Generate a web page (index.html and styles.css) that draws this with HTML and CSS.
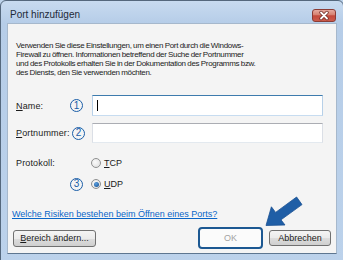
FILE: index.html
```html
<!DOCTYPE html>
<html lang="de">
<head>
    <meta charset="UTF-8">
    <meta name="viewport" content="width=device-width, initial-scale=1.0">
    <title>Port hinzufügen</title>
    <link rel="stylesheet" href="styles.css">
</head>
<body>
    <div class="window">
        <div class="titlebar">
            <span class="title">Port hinzufügen</span>
            <span class="close">
                <svg width="22" height="11" viewBox="0 0 22 11">
                    <path d="M8 2.5l6 6M14 2.5l-6 6" stroke="#6e2b25" stroke-width="3.4" stroke-linecap="round"/>
                    <path d="M8 2.5l6 6M14 2.5l-6 6" stroke="#fff" stroke-width="1.8" stroke-linecap="round"/>
                </svg>
            </span>
        </div>

        <div class="panel">
            <p class="intro">Verwenden Sie diese Einstellungen, um einen Port durch die Windows-<br>Firewall zu öffnen. Informationen betreffend der Suche der Portnummer<br>und des Protokolls erhalten Sie in der Dokumentation des Programms bzw.<br>des Diensts, den Sie verwenden möchten.</p>

            <div class="form">
                <div class="row row-name">
                    <label class="label"><u>N</u>ame:</label>
                    <span class="num">1</span>
                    <div class="field focused"><span class="caret"></span></div>
                </div>
                <div class="row row-port">
                    <label class="label"><u>P</u>ortnummer:</label>
                    <span class="num num-shift">2</span>
                    <div class="field"></div>
                </div>
                <div class="row row-tcp">
                    <label class="label">Protokoll:</label>
                    <span class="num-empty"></span>
                    <span class="radio"></span>
                    <span class="option"><u>T</u>CP</span>
                </div>
                <div class="row row-udp">
                    <span class="label"></span>
                    <span class="num">3</span>
                    <span class="radio checked"></span>
                    <span class="option"><u>U</u>DP</span>
                </div>
            </div>

            <a class="link" href="#">Welche Risiken bestehen beim Öffnen eines Ports?</a>

            <div class="buttons">
                <button class="btn btn-range"><u>B</u>ereich ändern...</button>
                <button class="btn btn-ok" disabled>OK</button>
                <button class="btn btn-cancel">Abbrechen</button>
            </div>
        </div>

        <!-- annotation arrow pointing at OK -->
        <svg class="arrow" width="343" height="260" viewBox="0 0 343 260">
            <polygon points="266,225.5 285,225 281,219.8 302,204.6 296.6,197 275.6,212.4 271.4,206.8" fill="#1f5ea6" stroke="#1a5192" stroke-width="0.8" stroke-linejoin="round"/>
        </svg>
    </div>
</body>
</html>
```

FILE: styles.css
```css
* {
    box-sizing: border-box;
}

body {
    margin: 0;
    width: 343px;
    height: 260px;
    overflow: hidden;
    background: #bdd3eb;
    font-family: "Liberation Sans", Arial, sans-serif;
    font-size: 9px;
    color: #1b1b1b;
}

.window {
    position: relative;
    width: 344px;
    height: 270px;
    padding: 0 6px;
    border: 1px solid #55687d;
    border-radius: 6px 6px 0 0;
    background: linear-gradient(#c8dbf0 0, #b6cde8 22px, #bcd2eb 100%);
}

.titlebar {
    display: flex;
    justify-content: space-between;
    align-items: flex-start;
    height: 22px;
}

.title {
    margin: 8px 0 0 3px;
    font-size: 10px;
    line-height: 12px;
    color: #1e2a38;
}

.close {
    display: flex;
    align-items: center;
    justify-content: center;
    width: 24px;
    height: 13px;
    margin: 8px 1px 0 0;
    border: 1px solid #8b3c35;
    border-radius: 3px;
    background: linear-gradient(#e6aa9f 0, #d6806f 45%, #c4493b 52%, #cb5b4c 100%);
}

.panel {
    display: flex;
    flex-direction: column;
    width: 330px;
    height: 231px;
    padding: 17px 5px 0 4px;
    border: 1px solid #a6b8cc;
    border-bottom-color: #5e7690;
    background: #f4f4f4;
}

/* narrower text than the rest of the dialog */
.intro {
    margin: 0 0 0 4px;
    font-size: 8px;
    line-height: 9px;
    letter-spacing: -0.33px;
    word-spacing: -0.3px;
    color: #222;
    white-space: nowrap;
}

.form {
    margin: 18px 0 0 4px;
}

.row {
    display: flex;
    align-items: center;
}

.row-name {
    height: 21px;
}

.row-port {
    height: 20px;
    margin-top: 7px;
}

.row-tcp {
    height: 14px;
    margin-top: 13px;
}

.row-udp {
    height: 14px;
    margin-top: 7px;
}

.label {
    width: 54px;
    flex: none;
    line-height: 12px;
    letter-spacing: 0.15px;
}

.num,
.num-empty {
    width: 22px;
    flex: none;
}

.num {
    display: flex;
    align-items: center;
    justify-content: center;
    max-width: 13px;
    height: 13px;
    margin-right: 9px;
    border: 1.4px solid #1a5ea8;
    border-radius: 50%;
    font-size: 10px;
    line-height: 1;
    color: #1a5ea8;
}

.num-shift {
    margin-left: 2px;
    margin-right: 7px;
}

.field {
    flex: 1;
    height: 100%;
    margin-right: 8px;
    border: 1px solid #dbdfe6;
    border-top-color: #abadb3;
    border-bottom-color: #e3e9ef;
    background: #fff;
}

.field.focused {
    display: flex;
    align-items: center;
    border-color: #b7d0e8;
    border-top-color: #3d7bad;
    border-bottom-color: #c7dcf0;
}

.caret {
    width: 1px;
    height: 11px;
    margin-left: 4px;
    background: #000;
}

.radio {
    position: relative;
    width: 10px;
    height: 10px;
    margin-left: -1px;
    border: 1px solid #8f9090;
    border-radius: 50%;
    background: radial-gradient(circle at 40% 40%, #fafafa, #dcdcdc);
}

.radio.checked::after {
    content: "";
    position: absolute;
    left: 1.5px;
    top: 1.5px;
    width: 5px;
    height: 5px;
    border-radius: 50%;
    background: radial-gradient(circle at 40% 35%, #5aa0e0, #124a8c);
}

.option {
    margin-left: 3px;
    line-height: 12px;
}

.link {
    display: block;
    margin-top: 18px;
    font-size: 9px;
    line-height: 11px;
    color: #0a66c8;
    text-decoration: underline;
    white-space: nowrap;
}

.buttons {
    display: flex;
    align-items: center;
    height: 22px;
    margin-top: 7px;
}

.btn {
    display: flex;
    align-items: center;
    justify-content: center;
    padding: 0;
    font-family: "Liberation Sans", Arial, sans-serif;
    font-size: 9px;
    color: #1b1b1b;
    border: 1px solid #707070;
    border-radius: 3px;
    background: linear-gradient(#f4f4f4 0, #ebebeb 50%, #dddddd 51%, #cfcfcf 100%);
}

.btn-range {
    width: 83px;
    height: 17px;
    margin-left: 1px;
}

.btn-ok {
    width: 65px;
    height: 22px;
    margin-left: auto;
    border: 2px solid #1c5892;
    border-radius: 4px;
    background: #fbfbfb;
    color: #a3a3a3;
}

.btn-cancel {
    width: 62px;
    height: 16px;
    margin-left: 6px;
}

.arrow {
    position: absolute;
    left: -1px;
    top: -1px;
    pointer-events: none;
}
```
